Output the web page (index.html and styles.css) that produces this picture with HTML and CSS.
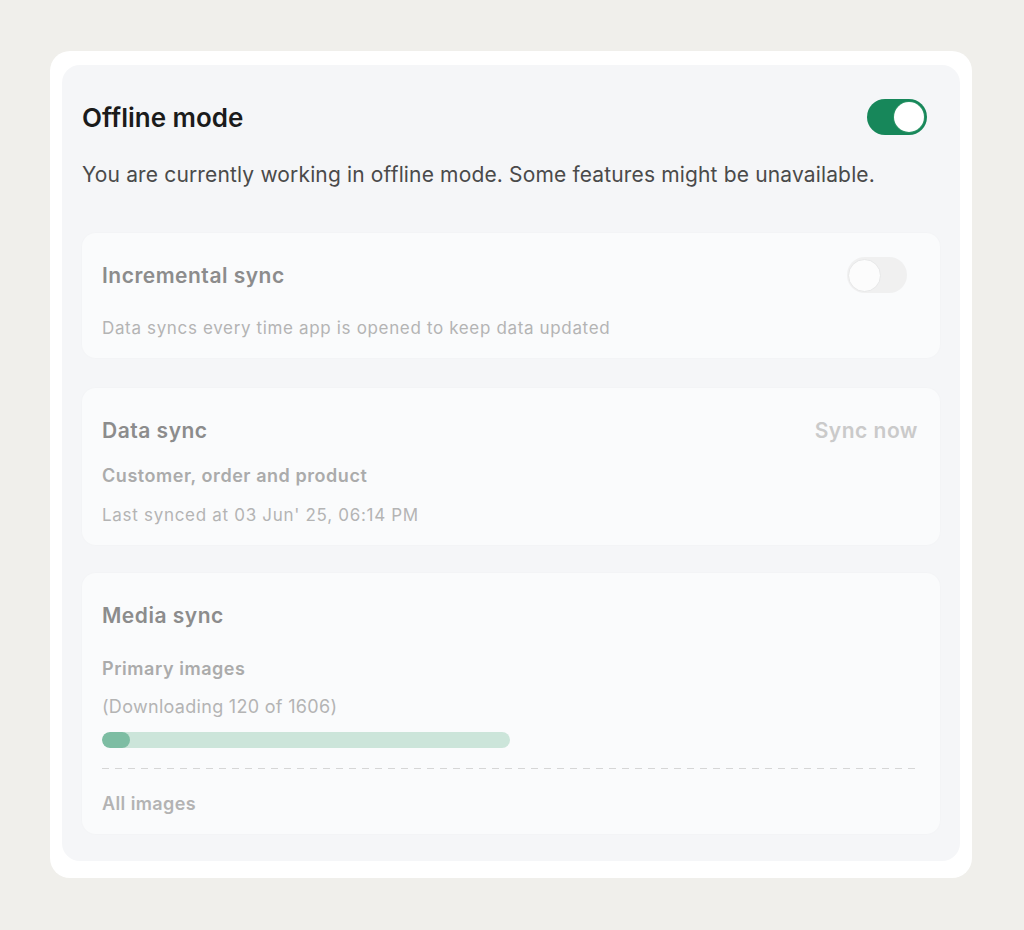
FILE: index.html
```html
<!DOCTYPE html>
<html lang="en">
<head>
<meta charset="utf-8">
<title>Offline mode</title>
<link rel="stylesheet" href="styles.css">
</head>
<body>
<div class="card">
  <div class="panel">
    <div class="head">
      <h1 class="title">Offline mode</h1>
      <span class="toggle toggle-on"><span class="knob"></span></span>
    </div>
    <p class="lead">You are currently working in offline mode. Some features might be unavailable.</p>

    <section class="section s-inc">
      <div class="row">
        <h2 class="sec-title">Incremental sync</h2>
        <span class="toggle toggle-off"><span class="knob"></span></span>
      </div>
      <p class="note note-inc">Data syncs every time app is opened to keep data updated</p>
    </section>

    <section class="section s-data">
      <div class="row">
        <h2 class="sec-title">Data sync</h2>
        <span class="action">Sync now</span>
      </div>
      <p class="sub sub-first">Customer, order and product</p>
      <p class="note note-last">Last synced at 03 Jun' 25, 06:14 PM</p>
    </section>

    <section class="section s-media">
      <div class="row">
        <h2 class="sec-title">Media sync</h2>
      </div>
      <p class="sub sub-primary">Primary images</p>
      <p class="note note-dl">(Downloading 120 of 1606)</p>
      <div class="progress"><div class="progress-fill" style="width: 28px"></div></div>
      <div class="dash"></div>
      <p class="sub sub-all">All images</p>
    </section>
  </div>
</div>
</body>
</html>
```

FILE: styles.css
```css
* { box-sizing: border-box; }

html, body { margin: 0; }

body {
  background: #f0efeb;
  font-family: Inter, "Noto Sans", sans-serif;
  padding: 51px 0 0 50px;
  min-height: 930px;
}

.card {
  width: 922px;
  background: #ffffff;
  border-radius: 20px;
  padding: 14px 12px 17px;
}

.panel {
  background: #f5f6f8;
  border-radius: 18px;
  padding: 34px 20px 27px;
}

.head {
  display: flex;
  align-items: center;
  justify-content: space-between;
  height: 36px;
}

.title {
  margin: 1px 0 0;
  font-size: 26px;
  font-weight: 600;
  color: #1b1b1b;
  letter-spacing: 0;
}

.lead {
  margin: 25px 0 0;
  font-size: 21px;
  line-height: 30px;
  color: #4a4a4a;
  letter-spacing: 0.15px;
}

.toggle {
  display: flex;
  align-items: center;
  width: 60px;
  height: 36px;
  border-radius: 18px;
  padding: 3px;
  margin-right: 13px;
}

.toggle .knob {
  width: 30px;
  height: 30px;
  border-radius: 50%;
  background: #ffffff;
}

.toggle-on {
  background: #17875a;
  justify-content: flex-end;
}

.toggle-on .knob {
  box-shadow: 0 0 0 1px #2a9466;
}

.toggle-off {
  background: #ececec;
  justify-content: flex-start;
  padding: 0 0 0 1px;
  opacity: 0.7;
}

.toggle-off .knob {
  width: 33px;
  height: 33px;
  border: 1px solid #e0e0e0;
  background: #fdfdfd;
}

.section {
  background: #fafbfc;
  border-radius: 14px;
  padding: 24px 20px 18px;
  box-shadow: 0 0 3px rgba(0, 0, 0, 0.025);
}

.s-inc { margin-top: 43px; }
.s-data { margin-top: 30px; }
.s-media { margin-top: 28px; }

.row {
  display: flex;
  align-items: center;
  justify-content: space-between;
  height: 36px;
}

.sec-title {
  margin: 0;
  font-size: 21px;
  font-weight: 600;
  color: #8c8c8c;
  letter-spacing: 0.5px;
}

.action {
  font-size: 21px;
  font-weight: 600;
  color: #cacaca;
  letter-spacing: 0.5px;
  margin-right: 2px;
}

.note {
  margin: 0;
  font-size: 17px;
  line-height: 24px;
  color: #b4b4b4;
  letter-spacing: 0.7px;
}

.sub {
  margin: 0;
  font-size: 18px;
  line-height: 24px;
  font-weight: 600;
  color: #ababab;
  letter-spacing: 0.55px;
}

.note-inc { margin-top: 23px; letter-spacing: 0.65px; }
.sub-first { margin-top: 16px; }
.note-last { margin-top: 15px; }
.sub-primary { margin-top: 24px; }
.note-dl { margin-top: 14px; font-size: 18px; letter-spacing: 0.3px; }
.sub-all { margin-top: 23px; color: #b3b3b3; letter-spacing: 0.4px; }

.progress {
  margin-top: 13px;
  width: 408px;
  height: 16px;
  border-radius: 8px;
  background: #cce5da;
  overflow: hidden;
}

.progress-fill {
  height: 100%;
  border-radius: 8px;
  background: #7dbda3;
}

.dash {
  margin-top: 20px;
  height: 1px;
  background: repeating-linear-gradient(to right, #d6d6d6 0 7px, transparent 7px 13px);
}
```
